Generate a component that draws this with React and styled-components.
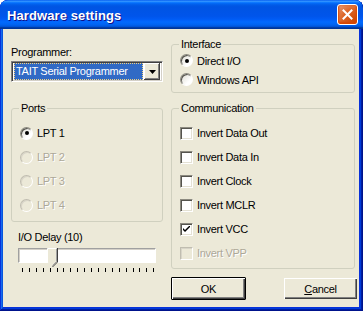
import React from "react";
import styled, { createGlobalStyle } from "styled-components";

const GlobalStyle = createGlobalStyle`
  html, body {
    margin: 0;
    padding: 0;
    background: #ffffff;
  }
  * {
    box-sizing: border-box;
  }
`;

const Window = styled.div`
  width: 363px;
  height: 311px;
  display: flex;
  flex-direction: column;
  border-radius: 8px 8px 0 0;
  overflow: hidden;
  background: #0831d9;
  padding: 0 4px 4px 3px;
  box-shadow: inset -1px -1px #00138c, inset 1px 1px #0831d9,
    inset -2px -2px #001ea0, inset 2px 2px #166aee,
    inset -3px -3px #003bda, inset 3px 3px #0855dd;
  font-family: "Liberation Sans", Arial, sans-serif;
`;

const TitleBar = styled.div`
  height: 29px;
  margin: 0 -4px 0 -3px;
  padding: 0 5px 0 7px;
  display: flex;
  align-items: center;
  justify-content: space-between;
  border-radius: 8px 8px 0 0;
  background: linear-gradient(
    180deg,
    #0058ee 0%,
    #3593ff 4%,
    #288eff 6%,
    #127dff 8%,
    #036ffc 10%,
    #0262ee 14%,
    #0057e5 20%,
    #0054e3 24%,
    #0055eb 56%,
    #005bf5 66%,
    #026afe 76%,
    #0062ef 86%,
    #0052d6 92%,
    #0040ab 94%,
    #003092 100%
  );
`;

const Title = styled.span`
  color: #ffffff;
  font-weight: bold;
  font-size: 13px;
  letter-spacing: 0.1px;
  text-shadow: 1px 1px #0f1089;
  padding-top: 1px;
`;

const CloseButton = styled.div`
  width: 21px;
  height: 21px;
  border: 1px solid #ffffff;
  border-radius: 3px;
  display: flex;
  align-items: center;
  justify-content: center;
  background: radial-gradient(
    circle at 90% 90%,
    #cc4600 0%,
    #dc6527 55%,
    #e8a17d 100%
  );
  box-shadow: inset 0 -1px 2px 1px #da4600;
`;

const Client = styled.div`
  flex: 1;
  background: #ece9d8;
  display: flex;
  gap: 8px;
  padding: 0 1px 0 8px;
  font-size: 11px;
  letter-spacing: -0.3px;
  color: #000000;
`;

const LeftCol = styled.div`
  width: 152px;
  display: flex;
  flex-direction: column;
`;

const RightCol = styled.div`
  width: 187px;
  display: flex;
  flex-direction: column;
`;

const Label = styled.div`
  line-height: 13px;
  margin-top: ${(p) => p.$mt}px;
  padding-left: ${(p) => p.$indent || 0}px;
`;

const Combo = styled.div`
  margin-top: 2px;
  height: 21px;
  display: flex;
  align-items: center;
  background: #ffffff;
  border-top: 1px solid #808080;
  border-left: 1px solid #808080;
  border-right: 1px solid #ffffff;
  border-bottom: 1px solid #ffffff;
  box-shadow: inset 1px 1px #404040, inset -1px -1px #d4d0c8;
  padding: 2px;
`;

const ComboValue = styled.div`
  flex: 1;
  height: 17px;
  margin-right: 1px;
  background: #316ac5;
  color: #ffffff;
  outline: 1px dotted #f0d080;
  outline-offset: -1px;
  padding-left: 2px;
  line-height: 17px;
`;

const ComboArrow = styled.div`
  width: 16px;
  height: 17px;
  background: #ece9d8;
  box-shadow: inset -1px -1px #404040, inset 1px 1px #ffffff,
    inset -2px -2px #808080;
  display: flex;
  align-items: center;
  justify-content: center;
`;

const Group = styled.fieldset`
  margin: ${(p) => p.$mt}px 0 0 0;
  padding: 0;
  height: ${(p) => p.$h}px;
  width: ${(p) => p.$w}px;
  min-width: 0;
  border: 1px solid #d0d0bf;
  border-radius: 3px;

  legend {
    margin-left: 7px;
    padding: 0 2px;
    line-height: 12px;
    font-size: 11px;
  }
`;

const Rows = styled.div`
  padding: ${(p) => p.$pt}px 0 0 8px;
  display: flex;
  flex-direction: column;
`;

const Row = styled.div`
  height: ${(p) => p.$h}px;
  display: flex;
  align-items: center;
  gap: 4px;
  color: ${(p) => (p.$disabled ? "#aca899" : "#000000")};
  text-shadow: ${(p) => (p.$disabled ? "1px 1px #ffffff" : "none")};
`;

const RadioMark = styled.span`
  width: 13px;
  height: 13px;
  border-radius: 50%;
  flex-shrink: 0;
  display: flex;
  align-items: center;
  justify-content: center;
  background: ${(p) =>
    p.$disabled
      ? "#ece9d8"
      : "linear-gradient(135deg, #dcdad0 0%, #ffffff 70%)"};
  border: 1px solid;
  border-color: ${(p) =>
    p.$disabled
      ? "#c0bdb0 #ffffff #ffffff #c0bdb0"
      : "#8c8a80 #ffffff #ffffff #8c8a80"};
  box-shadow: ${(p) =>
    p.$disabled ? "inset 1px 1px #d8d5c8" : "inset 1px 1px #55544e"};

  &::after {
    content: "";
    width: 4px;
    height: 4px;
    border-radius: 50%;
    background: #000000;
    display: ${(p) => (p.$checked ? "block" : "none")};
  }
`;

const CheckMark = styled.span`
  width: 13px;
  height: 13px;
  flex-shrink: 0;
  display: flex;
  align-items: center;
  justify-content: center;
  background: ${(p) => (p.$disabled ? "#ece9d8" : "#ffffff")};
  border: 1px solid;
  border-color: ${(p) =>
    p.$disabled
      ? "#c0bdb0 #ffffff #ffffff #c0bdb0"
      : "#8c8a80 #ffffff #ffffff #8c8a80"};
  box-shadow: ${(p) =>
    p.$disabled
      ? "inset 1px 1px #d8d5c8"
      : "inset 1px 1px #55544e, inset -1px -1px #e4e1d4"};
`;

const SliderArea = styled.div`
  margin-top: 4px;
  padding-left: 7px;
  display: flex;
  flex-direction: column;
`;

const Track = styled.div`
  position: relative;
  width: 138px;
  height: 15px;
  background: #ffffff;
  border-top: 1px solid #a0a0a0;
  border-left: 1px solid #a0a0a0;
  border-right: 1px solid #ffffff;
  border-bottom: 1px solid #ffffff;
  box-shadow: inset 1px 1px #d4d0c8;
`;

const Thumb = styled.svg`
  position: absolute;
  left: 28px;
  top: -1px;
`;

const Ticks = styled.div`
  margin: 5px 0 0 4px;
  width: 132px;
  height: 4px;
  display: flex;
  gap: 6.07px;

  span {
    width: 1px;
    height: 4px;
    background: #000000;
  }
  span:last-child {
    margin-left: auto;
  }
`;

const Buttons = styled.div`
  margin-top: 8px;
  display: flex;
  justify-content: space-between;
`;

const Button = styled.div`
  width: 75px;
  height: 23px;
  display: flex;
  align-items: center;
  justify-content: center;
  background: #ece9d8;
  border: 1px solid ${(p) => (p.$default ? "#000000" : "#ece9d8")};
  box-shadow: inset 1px 1px #ffffff, inset -1px -1px #404040,
    inset -2px -2px #808080;
  border-radius: 1px;
  u {
    text-decoration: underline;
  }
`;

function Radio({ label, checked, disabled, h }) {
  return (
    <Row $h={h} $disabled={disabled}>
      <RadioMark $checked={checked} $disabled={disabled} />
      <span>{label}</span>
    </Row>
  );
}

function Check({ label, checked, disabled }) {
  return (
    <Row $h={24} $disabled={disabled}>
      <CheckMark $disabled={disabled}>
        {checked && (
          <svg width="7" height="7" viewBox="0 0 7 7">
            <path d="M0 2 L0 4 L2 6 L7 1 L7 -1 L2 4 Z" fill="#000" />
          </svg>
        )}
      </CheckMark>
      <span>{label}</span>
    </Row>
  );
}

export default function App() {
  const ticks = Array.from({ length: 20 });
  return (
    <>
      <GlobalStyle />
      <Window>
        <TitleBar>
          <Title>Hardware settings</Title>
          <CloseButton>
            <svg width="11" height="11" viewBox="0 0 11 11">
              <path
                d="M1.5 1.5 L9.5 9.5 M9.5 1.5 L1.5 9.5"
                stroke="#ffffff"
                strokeWidth="2"
                strokeLinecap="square"
              />
            </svg>
          </CloseButton>
        </TitleBar>
        <Client>
          <LeftCol>
            <Label $mt={17}>Programmer:</Label>
            <Combo>
              <ComboValue>TAIT Serial Programmer</ComboValue>
              <ComboArrow>
                <svg width="7" height="4" viewBox="0 0 7 4">
                  <path d="M0 0 H7 L3.5 4 Z" fill="#000" />
                </svg>
              </ComboArrow>
            </Combo>
            <Group $mt={20} $h={120} $w={152}>
              <legend>Ports</legend>
              <Rows $pt={7}>
                <Radio h={24} label="LPT 1" checked />
                <Radio h={24} label="LPT 2" disabled />
                <Radio h={24} label="LPT 3" disabled />
                <Radio h={24} label="LPT 4" disabled />
              </Rows>
            </Group>
            <Label $mt={9} $indent={7}>
              I/O Delay (10)
            </Label>
            <SliderArea>
              <Track>
                <Thumb width="11" height="20" viewBox="0 0 11 20">
                  <path d="M0.5 0.5 H10.5 V14 L5.5 19 L0.5 14 Z" fill="#ece9d8" />
                  <path d="M0.5 14 V0.5 H9.5" stroke="#ffffff" fill="none" />
                  <path d="M10.5 0 V14 L5.5 19" stroke="#404040" fill="none" />
                  <path d="M9.5 1 V13.6 L5.5 17.6" stroke="#a0a0a0" fill="none" />
                </Thumb>
              </Track>
              <Ticks>
                {ticks.map((_, i) => (
                  <span key={i} />
                ))}
              </Ticks>
            </SliderArea>
          </LeftCol>
          <RightCol>
            <Group $mt={9} $h={55} $w={184}>
              <legend>Interface</legend>
              <Rows $pt={1}>
                <Radio h={19} label="Direct I/O" checked />
                <Radio h={19} label="Windows API" />
              </Rows>
            </Group>
            <Group $mt={9} $h={167} $w={184}>
              <legend>Communication</legend>
              <Rows $pt={7}>
                <Check label="Invert Data Out" />
                <Check label="Invert Data In" />
                <Check label="Invert Clock" />
                <Check label="Invert MCLR" />
                <Check label="Invert VCC" checked />
                <Check label="Invert VPP" disabled />
              </Rows>
            </Group>
            <Buttons>
              <Button $default>OK</Button>
              <Button>
                <span>
                  <u>C</u>ancel
                </span>
              </Button>
            </Buttons>
          </RightCol>
        </Client>
      </Window>
    </>
  );
}
